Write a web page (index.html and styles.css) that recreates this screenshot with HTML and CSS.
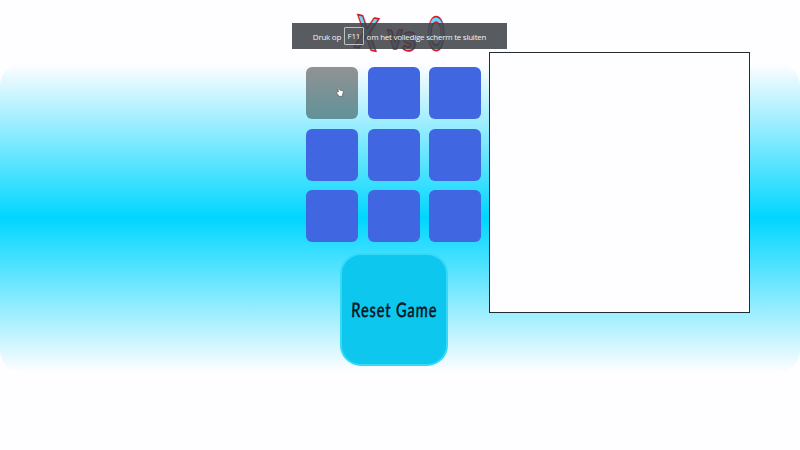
FILE: index.html
```html
<!DOCTYPE html>
<html lang="nl">
<head>
<meta charset="utf-8">
<title>X vs O</title>
<link rel="stylesheet" href="styles.css">
</head>
<body>
<h1 class="title"><span class="letter letter-x">X</span><span class="letter letter-v">v</span><span class="letter letter-s">s</span><span class="letter letter-o">O</span></h1>
<main class="stage">
  <section class="game">
    <div class="board">
      <div class="cell cell-hover"></div><div class="cell"></div><div class="cell"></div>
      <div class="cell"></div><div class="cell"></div><div class="cell"></div>
      <div class="cell"></div><div class="cell"></div><div class="cell"></div>
    </div>
    <button class="reset"><span class="reset-label">Reset Game</span></button>
  </section>
  <aside class="log"></aside>
</main>
<div class="notice"><span>Druk op</span><kbd>F11</kbd><span>om het volledige scherm te sluiten</span></div>
<svg class="pointer" viewBox="0 0 8 11"><path d="M2.3 6V1.4Q3 .2 3.7 1.4V4L6.6 4.7Q7.5 5 7.2 6.5L6.5 8.5V10.3H3L.8 7.2Q.3 5.8 1.2 5.7Z"/></svg>
</body>
</html>
```
FILE: styles.css
```css
* { box-sizing: border-box; }
body {
  margin: 0;
  height: 450px;
  overflow: hidden;
  background: #fefdff;
  font-family: "Open Sans", "Noto Sans", sans-serif;
}
.title {
  display: flex;
  align-items: flex-end;
  margin: 0;
  height: 64px;
  padding: 0 0 14px 357px;
  font-family: Lato, sans-serif;
  font-weight: 400;
  color: #5edcf5;
}
.letter {
  display: block;
  line-height: 1;
  text-align: center;
  -webkit-text-stroke: 3.6px #d9192b;
  paint-order: stroke fill;
}
.letter-x { width: 21px; height: 40px; font-size: 43px; transform: translate(-3px, 0) scaleX(.72) rotate(8deg); }
.letter-v { width: 15px; height: 31px; margin-left: 9px; font-size: 32px; transform: translate(0, 1px) scaleX(.8); }
.letter-s { width: 14px; height: 31px; font-size: 32px; transform: translate(0, 3px) scaleX(.9); }
.letter-o { width: 19px; height: 40px; margin-left: 9px; font-size: 44px; transform: translate(-2px, 0) scaleX(.48) rotate(2deg); }
.stage {
  display: flex;
  height: 308px;
  padding-left: 306px;
  border-radius: 22px;
  background: linear-gradient(#fefdff, #00d6ff 50%, #fefdff);
}
.game {
  width: 176px;
  padding-top: 3px;
}
.board {
  display: grid;
  grid-template-columns: repeat(3, 52px);
  grid-auto-rows: 52px;
  gap: 9.5px;
}
.cell {
  border-radius: 6px;
  background: #4067e1;
}
.cell-hover { background: linear-gradient(#919294, #609299); }
.reset {
  display: flex;
  align-items: center;
  justify-content: center;
  width: 108px;
  height: 113px;
  margin: 11px 0 0 34px;
  padding: 0;
  border: 2px solid #34d9f7;
  border-radius: 21px;
  background: #0dc7ee;
  color: #06141b;
}
.reset-label {
  font: 500 20px/1 Lato, sans-serif;
  letter-spacing: 1.2px;
  white-space: nowrap;
  -webkit-text-stroke: .4px #06141b;
  transform: translate(.5px, -1px) scaleX(.73) skewX(-3deg);
}
.log {
  width: 261px;
  height: 261px;
  margin: -12px 0 0 7px;
  border: 1px solid #222b30;
  background: #fefdff;
}
.notice {
  position: absolute;
  top: 23px;
  left: 292px;
  display: flex;
  align-items: center;
  justify-content: center;
  width: 215px;
  height: 26px;
  gap: 3px;
  background: rgba(60, 64, 70, .86);
  color: #f4f4f5;
  font-size: 8px;
  letter-spacing: -.25px;
  white-space: nowrap;
}
.notice kbd {
  padding: 0 2.5px;
  height: 18px;
  border: 1px solid #c0c1c3;
  border-radius: 1px;
  font: inherit;
  line-height: 16px;
}
.pointer {
  position: absolute;
  top: 86px;
  left: 336px;
  width: 8px;
  height: 11px;
  fill: #fff;
  stroke: #554c50;
  stroke-width: .6;
}
```
